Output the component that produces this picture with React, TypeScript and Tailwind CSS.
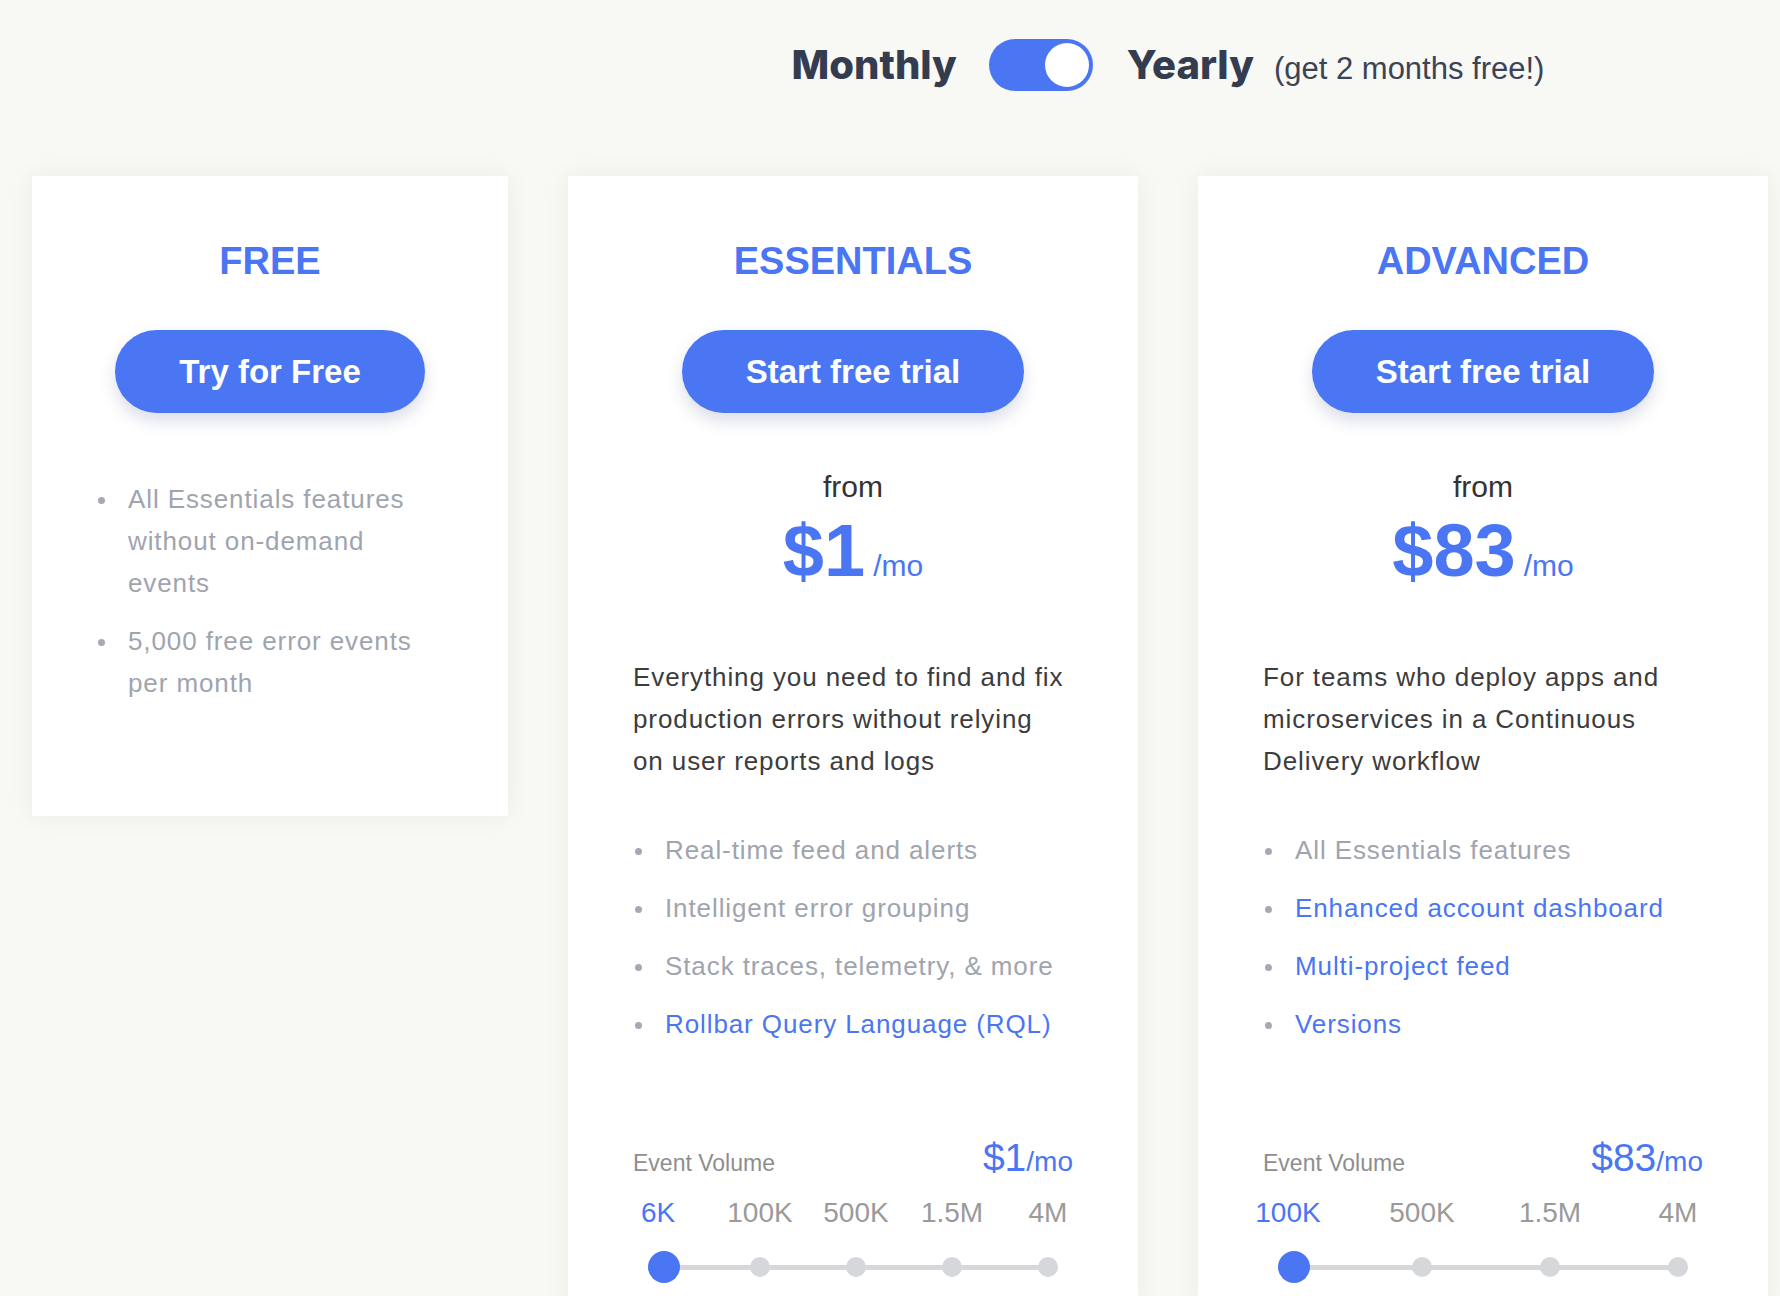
import React from "react";

const Feature = ({ text, blue }: { text: string; blue?: boolean }) => (
  <li className="flex items-start">
    <span className="ml-[2px] mt-[19px] h-[7px] w-[7px] shrink-0 rounded-full bg-[#a5a9b3]" />
    <span
      className={
        blue
          ? "ml-[23px] text-[26px] leading-[42px] tracking-[0.9px] text-[#4a76f4]"
          : "ml-[23px] text-[26px] leading-[42px] tracking-[0.9px] text-[#a0a4ae]"
      }
    >
      {text}
    </span>
  </li>
);

const Volume = ({ price, labels }: { price: string; labels: string[] }) => (
  <div className="mt-[94px]">
    <div className="flex items-baseline justify-between">
      <span className="text-[23px] leading-[38px] text-[#8e8e8e]">Event Volume</span>
      <span className="text-[#4a76f4]">
        <span className="text-[39px] leading-[38px]">{price}</span>
        <span className="text-[28px]">/mo</span>
      </span>
    </div>
    <div className="ml-[31px] mr-[25px]">
      <div className="mt-[12px] flex justify-between">
        {labels.map((l, i) => (
          <div key={l} className="flex w-0 shrink-0 justify-center">
            <span
              className={
                i === 0
                  ? "mr-[12px] shrink-0 whitespace-nowrap text-[28px] leading-[36px] text-[#4a76f4]"
                  : "shrink-0 whitespace-nowrap text-[28px] leading-[36px] text-[#9a9a9a]"
              }
            >
              {l}
            </span>
          </div>
        ))}
      </div>
      <div className="relative mt-[20px] flex h-[32px] items-center justify-between">
        <div className="absolute left-0 right-0 top-[14px] h-[5px] bg-[#d5d7db]" />
        {labels.map((l, i) => (
          <div key={l} className="relative flex w-0 shrink-0 justify-center">
            {i === 0 ? (
              <span className="h-[32px] w-[32px] shrink-0 rounded-full bg-[#4a76f4]" />
            ) : (
              <span className="h-[20px] w-[20px] shrink-0 rounded-full bg-[#d5d7db]" />
            )}
          </div>
        ))}
      </div>
    </div>
  </div>
);

const Button = ({ children }: { children: React.ReactNode }) => (
  <div className="mt-[50px] flex justify-center">
    <div className="flex h-[83px] items-center rounded-full bg-[#4a76f4] px-[64px] text-[33px] font-bold text-white shadow-[0_8px_16px_rgba(60,70,130,0.18)]">
      {children}
    </div>
  </div>
);

const PaidCard = ({
  title,
  price,
  desc,
  features,
  labels,
}: {
  title: string;
  price: string;
  desc: string;
  features: { t: string; b?: boolean }[];
  labels: string[];
}) => (
  <div className="h-[1140px] w-[570px] shrink-0 bg-white px-[65px] pt-[66px] shadow-[0_0_24px_rgba(0,0,0,0.06)]">
    <h2 className="text-center text-[38px] font-bold leading-[38px] text-[#4a76f4]">{title}</h2>
    <Button>Start free trial</Button>
    <div className="mt-[56px] text-center text-[30px] leading-[36px] text-[#333333]">from</div>
    <div className="mt-[9px] flex items-baseline justify-center text-[#4a76f4]">
      <span className="text-[74px] font-bold leading-[74px]">{price}</span>
      <span className="ml-[8px] text-[30px]">/mo</span>
    </div>
    <p className="mt-[68px] w-[436px] text-[26px] leading-[42px] tracking-[0.9px] text-[#3c3c3c]">{desc}</p>
    <ul className="mt-[47px] flex flex-col gap-[16px]">
      {features.map((f) => (
        <Feature key={f.t} text={f.t} blue={f.b} />
      ))}
    </ul>
    <Volume price={price} labels={labels} />
  </div>
);

export default function App() {
  return (
    <div
      className="min-h-[1296px] overflow-hidden bg-[#f8f8f5] pl-[32px] pr-[12px]"
      style={{ fontFamily: '"Liberation Sans", Arial, sans-serif' }}
    >
      <div className="flex pt-[39px]">
        <div className="w-[536px] shrink-0" />
        <div className="flex h-[52px] flex-1 items-baseline justify-center">
          <span
            className="text-[40px] font-extrabold leading-[52px] text-[#343c50]"
            style={{ fontFamily: "Inter, sans-serif" }}
          >
            Monthly
          </span>
          <div className="ml-[32px] flex h-[52px] w-[104px] items-center justify-end self-center rounded-full bg-[#4a76f4] p-[4px]">
            <span className="h-[44px] w-[44px] rounded-full bg-white" />
          </div>
          <span
            className="ml-[34px] text-[40px] font-extrabold leading-[52px] text-[#343c50]"
            style={{ fontFamily: "Inter, sans-serif" }}
          >
            Yearly
          </span>
          <span className="ml-[20px] text-[31px] leading-[44px] text-[#3c4356]">(get 2 months free!)</span>
        </div>
      </div>

      <div className="mt-[85px] flex items-start gap-[60px]">
        <div className="h-[640px] w-[476px] shrink-0 bg-white px-[64px] pt-[66px] shadow-[0_0_24px_rgba(0,0,0,0.06)]">
          <h2 className="text-center text-[38px] font-bold leading-[38px] text-[#4a76f4]">FREE</h2>
          <Button>Try for Free</Button>
          <ul className="mt-[65px] flex flex-col gap-[16px]">
            <Feature text="All Essentials features without on-demand events" />
            <Feature text="5,000 free error events per month" />
          </ul>
        </div>
        <PaidCard
          title="ESSENTIALS"
          price="$1"
          desc="Everything you need to find and fix production errors without relying on user reports and logs"
          features={[
            { t: "Real-time feed and alerts" },
            { t: "Intelligent error grouping" },
            { t: "Stack traces, telemetry, & more" },
            { t: "Rollbar Query Language (RQL)", b: true },
          ]}
          labels={["6K", "100K", "500K", "1.5M", "4M"]}
        />
        <PaidCard
          title="ADVANCED"
          price="$83"
          desc="For teams who deploy apps and microservices in a Continuous Delivery workflow"
          features={[
            { t: "All Essentials features" },
            { t: "Enhanced account dashboard", b: true },
            { t: "Multi-project feed", b: true },
            { t: "Versions", b: true },
          ]}
          labels={["100K", "500K", "1.5M", "4M"]}
        />
      </div>
    </div>
  );
}
